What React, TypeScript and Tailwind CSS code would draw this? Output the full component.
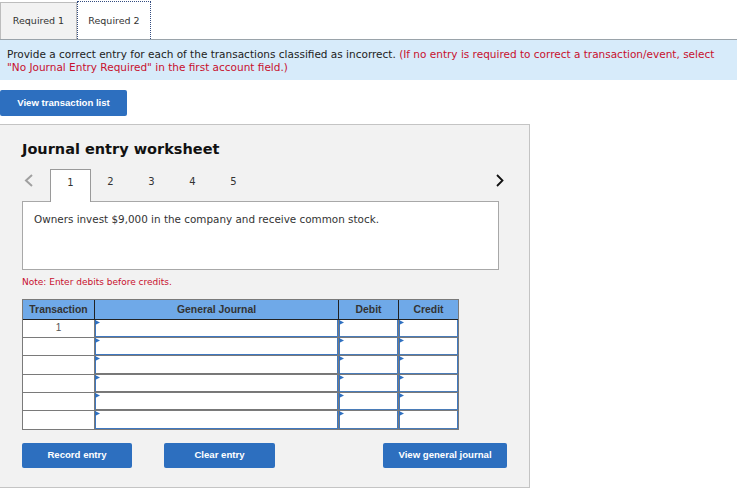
import React from "react";

const verdana = "font-['DejaVu_Sans',Verdana,sans-serif]";
const arial = "font-['Liberation_Sans',Arial,sans-serif]";

function Cell({ w, bottom }: { w: string; bottom: string }) {
  return (
    <div className={`${w} h-full border-l border-[#7a7a7a]`}>
      <div className={`relative h-full bg-white border-x border-[#3f78c0] border-b ${bottom}`}>
        <svg className="absolute left-[-1px] top-0" width="6" height="6" viewBox="0 0 6 6">
          <path d="M0 0 L5 2.5 L0 5 Z" fill="#2f70c0" />
        </svg>
      </div>
    </div>
  );
}

const rowHeights = ["h-[18px]", "h-[18px]", "h-[19px]", "h-[18px]", "h-[18px]", "h-[19px]"];
const journalBottoms = [
  "border-b-[#3f78c0]",
  "border-b-[#3f78c0]",
  "border-b-[#777777]",
  "border-b-[#777777]",
  "border-b-[#777777]",
  "border-b-[#3f78c0]",
];

function Btn({ label, className }: { label: string; className: string }) {
  return (
    <button className={`${arial} bg-[#2d6fbf] rounded-[2px] text-white text-[9.6px] font-bold ${className}`}>
      {label}
    </button>
  );
}

export default function App() {
  return (
    <div className={`${verdana} w-[741px] h-[504px] bg-white text-[#222] overflow-hidden`}>
      <div className="flex h-[39px] items-end">
        <div className="w-[77px] h-[37px] bg-[#f2f2f2] border border-b-0 border-[#bdbdbd] flex items-center justify-center text-[9.5px] text-[#333]">
          Required 1
        </div>
        <div className="w-[74px] h-[38px] bg-white border border-b-0 border-dotted border-[#334c80] flex items-center justify-center pt-[2px] text-[9.5px] text-[#333]">
          Required 2
        </div>
      </div>
      <div className="w-[737px] h-[41px] bg-[#d7ebfa] border-t border-[#9aa3aa] pl-[7px] pt-[8px] text-[10.5px] leading-[13px] text-[#222]">
        Provide a correct entry for each of the transactions classified as incorrect.{" "}
        <span className="text-[#c8102e]">
          (If no entry is required to correct a transaction/event, select
          <br />
          "No Journal Entry Required" in the first account field.)
        </span>
      </div>
      <Btn label="View transaction list" className="block mt-[10px] w-[127px] h-[26px]" />
      <div className="mt-[8px] w-[530px] h-[364px] bg-[#f2f2f2] border border-l-0 border-[#c4c4c4] pl-[22px] pt-[15px]">
        <h2 className="text-[14.5px] font-bold leading-[18px] text-[#111]">Journal entry worksheet</h2>
        <div className="relative flex mt-[11px] h-[33px] w-[483px] items-center">
          <svg className="ml-[2px] mr-[16px] mb-[11px]" width="10" height="13" viewBox="0 0 10 13" fill="none" stroke="#a0a0a0" strokeWidth="2">
            <path d="M8 1 L2 6.5 L8 12" />
          </svg>
          <div className="relative z-10 w-[41px] h-[33px] mr-[-1px] bg-white border border-b-0 border-[#9a9a9a] flex items-center justify-center pb-[8px] text-[10px] text-[#333]">
            1
          </div>
          {["2", "3", "4", "5"].map((n) => (
            <div key={n} className="w-[41px] mb-[9px] text-center text-[10px] text-[#333]">
              {n}
            </div>
          ))}
          <svg className="absolute right-[1px] top-[5px]" width="8" height="13" viewBox="0 0 8 13" fill="none" stroke="#111" strokeWidth="1.8">
            <path d="M1 1 L6.5 6.5 L1 12" />
          </svg>
        </div>
        <div className="mt-[-1px] w-[477px] h-[69px] bg-white border border-[#a8a8a8] pl-[11px] pt-[10px] text-[10.4px] leading-[14px] text-[#333]">
          Owners invest $9,000 in the company and receive common stock.
        </div>
        <p className="mt-[6px] text-[9px] leading-[12px] text-[#c8102e]">Note: Enter debits before credits.</p>
        <div className={`${arial} mt-[11px] w-[437px] border border-b-0 border-[#7a7a7a]`}>
          <div className="flex h-[20px] bg-[#6fa9e8] border-b border-[#222] text-[10.4px] font-bold text-[#333] leading-[19px] text-center">
            <div className="w-[71px]">Transaction</div>
            <div className="w-[244px] border-l border-[#222]">General Journal</div>
            <div className="w-[60px] border-l border-[#222]">Debit</div>
            <div className="w-[60px] border-l border-[#222]">Credit</div>
          </div>
          {rowHeights.map((h, i) => (
            <div key={i} className={`flex ${h} border-b border-[#7a7a7a]`}>
              <div className="w-[71px] bg-white text-center text-[10px] leading-[16px] text-[#555]">
                {i === 0 ? "1" : ""}
              </div>
              <Cell w="w-[244px]" bottom={journalBottoms[i]} />
              <Cell w="w-[60px]" bottom="border-b-[#4a7cb8]" />
              <Cell w="w-[60px]" bottom="border-b-[#4a7cb8]" />
            </div>
          ))}
        </div>
        <div className="flex mt-[13px] w-[485px]">
          <Btn label="Record entry" className="w-[110px] h-[25px]" />
          <Btn label="Clear entry" className="w-[111px] h-[25px] ml-[32px]" />
          <Btn label="View general journal" className="w-[124px] h-[25px] ml-auto" />
        </div>
      </div>
    </div>
  );
}
